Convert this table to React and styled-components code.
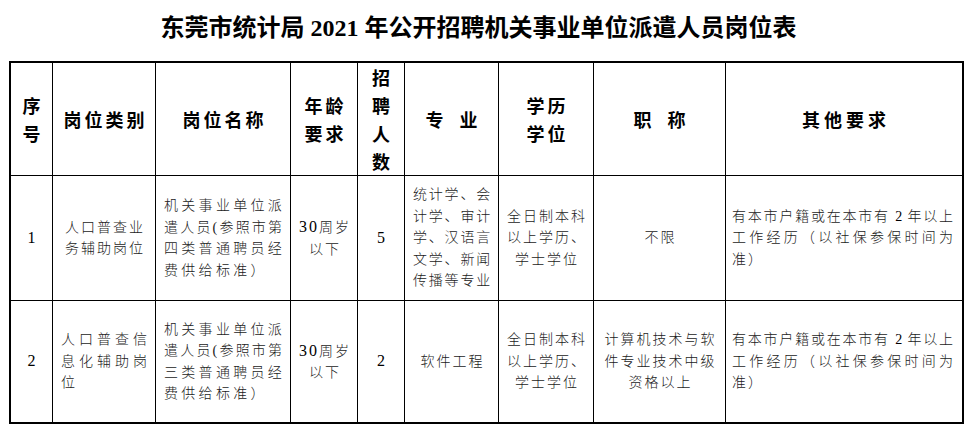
import React from "react";
import styled, { createGlobalStyle } from "styled-components";

const GlobalStyle = createGlobalStyle`
  html, body { margin: 0; padding: 0; background: #fff; }
  body { font-family: "Noto Sans CJK SC", sans-serif; color: #000; }
`;

const COLS = [42, 103, 135, 67, 47, 94, 95, 132, 236];
const ROWS = [113, 125, 121];

const Page = styled.div`
  width: 968px;
  height: 432px;
  box-sizing: border-box;
`;

const Title = styled.h1`
  margin: 0;
  height: 50px;
  padding-right: 11px;
  display: flex;
  align-items: center;
  justify-content: center;
  font-family: "Liberation Serif", "Noto Sans CJK SC", serif;
  font-size: 24px;
  font-weight: 700;
  color: #000;
  white-space: nowrap;
`;

const TableWrap = styled.div`
  margin-top: 11px;
  padding-left: 9px;
`;

const Grid = styled.div`
  display: grid;
  width: max-content;
  grid-template-columns: ${COLS.map((c) => `${c}px`).join(" ")};
  grid-template-rows: ${ROWS.map((r) => `${r}px`).join(" ")};
  border: 2px solid #000;
`;

const Cell = styled.div`
  box-sizing: border-box;
  display: flex;
  flex-direction: column;
  justify-content: center;
  align-items: ${(p) => (p.$align === "left" ? "flex-start" : "center")};
  padding: 0 ${(p) => p.$pr ?? 0}px 0 ${(p) => p.$pl ?? 0}px;
  border-right: ${(p) => (p.$lastCol ? "none" : "1px solid #000")};
  border-bottom: ${(p) => (p.$lastRow ? "none" : "1px solid #000")};
  overflow: hidden;
`;

const HeadText = styled.div`
  font-family: "Noto Sans CJK SC", sans-serif;
  font-size: 18px;
  font-weight: 700;
  line-height: 28px;
  letter-spacing: ${(p) => p.$ls ?? 3}px;
  padding-left: ${(p) => p.$ls ?? 3}px;
  text-align: center;
  white-space: pre;
`;

const BodyText = styled.div`
  font-family: "Liberation Serif", "Noto Sans CJK SC", serif;
  font-size: 14px;
  font-weight: 300;
  line-height: 21.5px;
  color: #1a1a1a;
  letter-spacing: ${(p) => p.$ls ?? 2}px;
  padding-left: ${(p) => (p.$center ? p.$ls ?? 2 : 0)}px;
  text-align: ${(p) => (p.$center ? "center" : "left")};
  width: ${(p) => (p.$w ? `${p.$w}px` : "auto")};
`;

const Line = styled.span`
  display: block;
  white-space: pre;
  text-align: ${(p) => (p.$justify ? "justify" : "inherit")};
  text-align-last: ${(p) => (p.$justify ? "justify" : "auto")};
  letter-spacing: ${(p) =>
    p.$justify ? "0" : p.$ls != null ? `${p.$ls}px` : "inherit"};
`;

const Num = styled.span`
  font-family: "Liberation Serif", serif;
  font-size: ${(p) => p.$size ?? 16}px;
  font-weight: 400;
  color: #000;
`;

const headers = [
  { lines: ["序", "号"] },
  { lines: ["岗位类别"] },
  { lines: ["岗位名称"] },
  { lines: ["年龄", "要求"] },
  { lines: ["招", "聘", "人", "数"] },
  { lines: ["专 业"], ls: 6 },
  { lines: ["学历", "学位"] },
  { lines: ["职 称"], ls: 6 },
  { lines: ["其他要求"], ls: 4 },
];

const otherReq = (
  <BodyText $w={221}>
    <Line $justify>有本市户籍或在本市有 <Num $size={14}>2</Num> 年以上</Line>
    <Line $justify>工作经历（以社保参保时间为</Line>
    <Line>准）</Line>
  </BodyText>
);

const jobName = (kind) => (
  <BodyText $ls={3.3}>
    <Line>机关事业单位派</Line>
    <Line $ls={2.2}>遣人员(参照市第</Line>
    <Line>{kind}类普通聘员经</Line>
    <Line>费供给标准）</Line>
  </BodyText>
);

const age = (
  <BodyText $center $ls={2}>
    <Line><Num>30</Num>周岁</Line>
    <Line>以下</Line>
  </BodyText>
);

const degree = (
  <BodyText $center $ls={2}>
    <Line>全日制本科</Line>
    <Line>以上学历、</Line>
    <Line>学士学位</Line>
  </BodyText>
);

const rows = [
  [
    { content: <BodyText $center><Num>1</Num></BodyText> },
    {
      content: (
        <BodyText $center $ls={2}>
          <Line>人口普查业</Line>
          <Line>务辅助岗位</Line>
        </BodyText>
      ),
    },
    { align: "left", pl: 8, content: jobName("四") },
    { content: age },
    { content: <BodyText $center><Num>5</Num></BodyText> },
    {
      align: "left",
      pl: 8,
      content: (
        <BodyText $ls={1.8}>
          <Line>统计学、会</Line>
          <Line>计学、审计</Line>
          <Line>学、汉语言</Line>
          <Line>文学、新闻</Line>
          <Line>传播等专业</Line>
        </BodyText>
      ),
    },
    { content: degree },
    { content: <BodyText $center $ls={2}>不限</BodyText> },
    { align: "left", pl: 6, pr: 9, content: otherReq },
  ],
  [
    { content: <BodyText $center><Num>2</Num></BodyText> },
    {
      align: "left",
      pl: 8,
      content: (
        <BodyText $ls={4}>
          <Line>人口普查信</Line>
          <Line>息化辅助岗</Line>
          <Line>位</Line>
        </BodyText>
      ),
    },
    { align: "left", pl: 8, content: jobName("三") },
    { content: age },
    { content: <BodyText $center><Num>2</Num></BodyText> },
    { content: <BodyText $center $ls={2}>软件工程</BodyText> },
    { content: degree },
    {
      content: (
        <BodyText $center $ls={2}>
          <Line>计算机技术与软</Line>
          <Line>件专业技术中级</Line>
          <Line>资格以上</Line>
        </BodyText>
      ),
    },
    { align: "left", pl: 6, pr: 9, content: otherReq },
  ],
];

export default function App() {
  return (
    <Page>
      <GlobalStyle />
      <Title>东莞市统计局 2021 年公开招聘机关事业单位派遣人员岗位表</Title>
      <TableWrap>
        <Grid>
          {headers.map((h, i) => (
            <Cell key={`h${i}`} $lastCol={i === COLS.length - 1}>
              <HeadText $ls={h.ls}>{h.lines.join("\n")}</HeadText>
            </Cell>
          ))}
          {rows.map((row, r) =>
            row.map((c, i) => (
              <Cell
                key={`r${r}c${i}`}
                $align={c.align}
                $pl={c.pl}
                $pr={c.pr}
                $lastCol={i === COLS.length - 1}
                $lastRow={r === rows.length - 1}
              >
                {c.content}
              </Cell>
            ))
          )}
        </Grid>
      </TableWrap>
    </Page>
  );
}
